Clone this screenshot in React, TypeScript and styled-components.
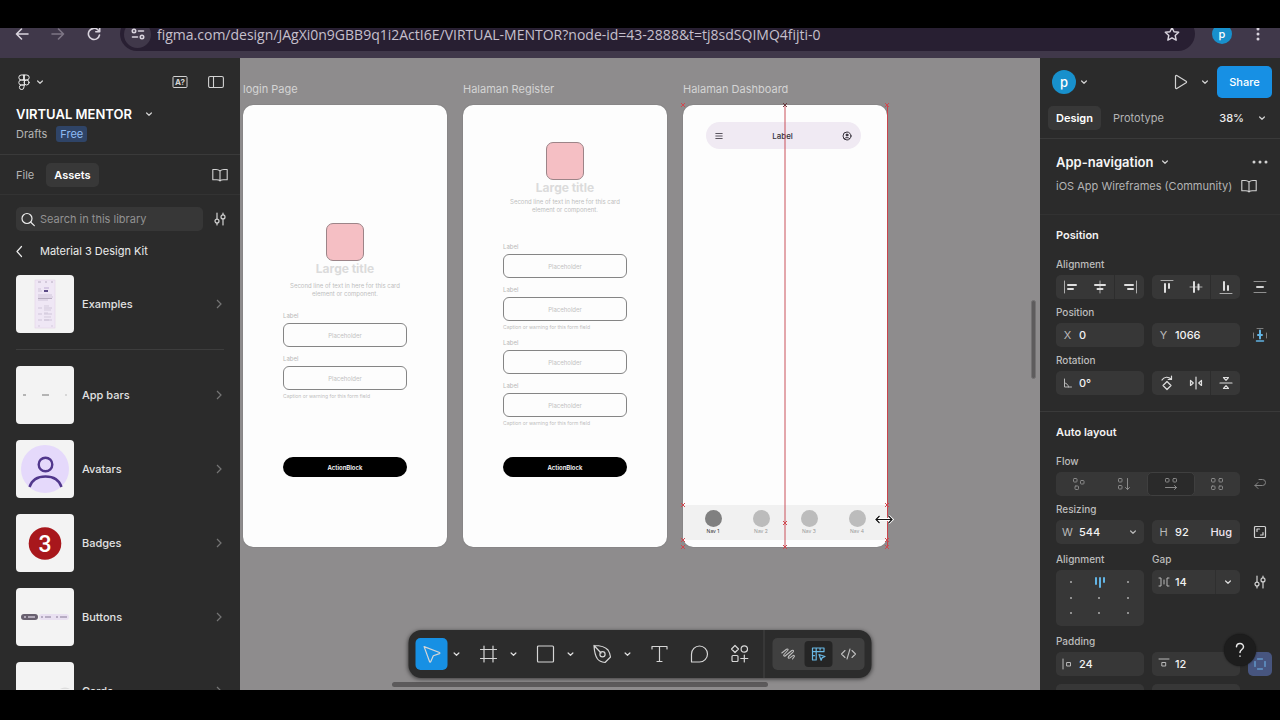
import React from "react";
import styled, { createGlobalStyle } from "styled-components";

const GlobalStyle = createGlobalStyle`
  *, *::before, *::after { box-sizing: border-box; }
  body { margin: 0; background: #000; }
  button, input { font: inherit; color: inherit; border: 0; padding: 0; margin: 0; background: none; }
  a { color: inherit; text-decoration: none; }
`;

const Page = styled.div`
  height: 100vh;
  padding: 28px 0 30px;
  display: flex;
  flex-direction: column;
  background: #000;
  color: #ececec;
  font-family: Inter, "Liberation Sans", sans-serif;
  font-size: 11px;
  overflow: hidden;
`;

/* ---------- browser bar ---------- */
const ChromeClip = styled.header`
  height: 30px;
  flex: none;
  overflow: hidden;
  display: flex;
  align-items: flex-end;
  background: #40384a;
`;
const ChromeRow = styled.div`
  flex: 1;
  height: 48px;
  display: flex;
  align-items: center;
  padding: 0 10px;
  color: #d9d4de;
`;
const ChromeButton = styled.button<{ $dim?: boolean }>`
  width: 24px;
  height: 24px;
  margin-right: 12px;
  display: grid;
  place-items: center;
  color: ${(p) => (p.$dim ? "#7d7685" : "#d9d4de")};
`;
const UrlPill = styled.div`
  flex: 1;
  height: 34px;
  margin: 0 17px 0 2px;
  padding: 0 15px 0 4px;
  border-radius: 17px;
  background: #281f32;
  display: flex;
  align-items: center;
  gap: 6px;
`;
const SiteInfo = styled.button`
  width: 27px;
  height: 27px;
  border-radius: 50%;
  background: #40384a;
  display: grid;
  place-items: center;
`;
const UrlInput = styled.input`
  flex: 1;
  min-width: 0;
  font-family: "Open Sans", sans-serif;
  font-size: 14px;
  color: #c6c0cd;
`;
const Avatar = styled.button<{ $size: number }>`
  width: ${(p) => p.$size}px;
  height: ${(p) => p.$size}px;
  border-radius: 50%;
  background: #1890cc;
  color: #fff;
  line-height: 16px;
  font-size: ${(p) => (p.$size > 20 ? 13 : 11)}px;
  font-weight: 500;
`;

/* ---------- frame of the app ---------- */
const Body = styled.div`
  flex: 1;
  min-height: 0;
  display: flex;
`;
const Panel = styled.aside`
  width: 240px;
  flex: none;
  background: #2b2b2b;
  overflow: hidden;
  position: relative;
`;
const IconButton = styled.button<{ $w?: number; $on?: boolean }>`
  width: ${(p) => p.$w ?? 24}px;
  height: 24px;
  flex: none;
  display: grid;
  place-items: center;
  border-radius: 5px;
  color: ${(p) => (p.$on ? "#a6c4ff" : "#d2d2d2")};
  background: ${(p) => (p.$on ? "#47557f" : "none")};
`;
const Spacer = styled.div`
  flex: 1;
`;
const Row = styled.div<{ $h: number }>`
  display: flex;
  align-items: center;
  height: ${(p) => p.$h}px;
`;

/* ---------- left panel ---------- */
const FileHead = styled.div`
  padding: 12px 8px 10px 16px;
  border-bottom: 1px solid #3a3a3a;
`;
const FileName = styled.h1`
  margin: 0 9px 0 0;
  font-size: 13px;
  font-weight: 600;
  color: #fff;
`;
const TitleRow = styled(Row)`
  margin-top: 10px;
`;
const Muted = styled.span`
  color: #b4b4b4;
  white-space: nowrap;
`;
const FreeBadge = styled.span`
  margin-left: 9px;
  padding: 0 4px;
  line-height: 16px;
  border-radius: 3px;
  background: #2f4467;
  color: #8fbcf5;
`;
const TabRow = styled.nav`
  height: 40px;
  display: flex;
  align-items: center;
  padding: 0 8px;
  border-bottom: 1px solid #333;
`;
const Tab = styled.button<{ $active?: boolean }>`
  height: 24px;
  padding: 0 8px;
  margin-right: 4px;
  border-radius: 5px;
  background: ${(p) => (p.$active ? "#383838" : "none")};
  color: ${(p) => (p.$active ? "#fff" : "#b4b4b4")};
  font-weight: ${(p) => (p.$active ? 600 : 400)};
`;
const SearchRow = styled.div`
  display: flex;
  gap: 5px;
  padding: 12px 8px 8px 16px;
`;
const SearchBox = styled.label`
  flex: 1;
  min-width: 0;
  height: 24px;
  display: flex;
  align-items: center;
  gap: 4px;
  padding-left: 4px;
  border-radius: 5px;
  background: #373737;
  input { flex: 1; min-width: 0; }
  input::placeholder { color: #929292; opacity: 1; }
`;
const BackRow = styled.button`
  display: flex;
  align-items: center;
  height: 24px;
  padding-left: 12px;
  gap: 13px;
`;
const AssetList = styled.ul`
  list-style: none;
  margin: 0 16px;
  padding: 12px 0 16px;
  display: flex;
  flex-direction: column;
  gap: 16px;
  &:not(:first-of-type) { border-top: 1px solid #3d3d3d; padding-top: 16px; }
`;
const AssetButton = styled.button`
  width: 100%;
  display: flex;
  align-items: center;
  gap: 8px;
  text-align: left;
  font-weight: 500;
  color: #e2e2e2;
`;
const Thumb = styled.span`
  width: 58px;
  height: 58px;
  flex: none;
  border-radius: 4px;
  background: #f3f3f3;
  overflow: hidden;
  svg { display: block; }
`;

/* ---------- canvas ---------- */
const Canvas = styled.main`
  flex: 1;
  min-width: 0;
  position: relative;
  overflow: hidden;
  background: #8e8c8d;
`;
const Frames = styled.div`
  display: flex;
  gap: 16px;
  padding: 22px 0 0 3px;
`;
const FrameColumn = styled.section`
  width: 204px;
  flex: none;
`;
const FrameName = styled.h2`
  margin: 0 0 7px;
  line-height: 18px;
  font-size: 11px;
  font-weight: 400;
  color: #d4d4d4;
  white-space: nowrap;
`;
const Frame = styled.div<{ $top: number }>`
  height: 442px;
  padding: ${(p) => p.$top}px 40px 70px;
  display: flex;
  flex-direction: column;
  align-items: stretch;
  position: relative;
  border-radius: 10px;
  background: #fdfdfd;
  box-shadow: 0 0 1px #555;
`;
const Logo = styled.div`
  width: 38px;
  height: 38px;
  align-self: center;
  border: 1px solid #9c8488;
  border-radius: 7px;
  background: #f5bfc4;
`;
const CardTitle = styled.h3`
  margin: 0;
  line-height: 16px;
  text-align: center;
  font-size: 12px;
  font-weight: 700;
  color: #dbdbdb;
`;
const CardText = styled.p<{ $gap: number }>`
  margin: ${(p) => p.$gap}px 0 0;
  text-align: center;
  font-size: 6px;
  line-height: 8px;
  color: #bdbdbd;
`;
const Form = styled.div<{ $gap: number }>`
  margin-top: ${(p) => p.$gap}px;
  display: flex;
  flex-direction: column;
  gap: 7px;
`;
const WireLabel = styled.label`
  display: block;
  padding-top: 1px;
  font-size: 6px;
  line-height: 8px;
  color: #b8b8b8;
`;
const WireInput = styled.input`
  display: block;
  width: 100%;
  height: 24px;
  margin-top: 3px;
  text-align: center;
  font-size: 6px;
  border: 1px solid #858585;
  border-radius: 6px;
  &::placeholder { color: #c2c2c2; opacity: 1; }
`;
const Caption = styled.small`
  display: block;
  margin-top: 2px;
  font-size: 5px;
  line-height: 8px;
  color: #bdbdbd;
`;
const ActionButton = styled.button`
  height: 20px;
  margin-top: auto;
  border-radius: 10px;
  background: #000;
  color: #fff;
  font-size: 6px;
  font-weight: 600;
`;
const Dashboard = styled(Frame)`
  padding: 17px 0 7px;
`;
const WireBar = styled.div`
  height: 27px;
  margin: 0 26px 0 23px;
  padding: 0 9px;
  border-radius: 14px;
  background: #f0eaf3;
  display: flex;
  align-items: center;
  justify-content: space-between;
  font-size: 8px;
  font-weight: 500;
  color: #35303a;
`;
const WireNav = styled.div`
  margin-top: auto;
  height: 35px;
  padding: 5px 6px 0;
  display: flex;
  background: #f1f1f1;
`;
const NavItem = styled.span<{ $on?: boolean }>`
  flex: 1;
  display: flex;
  flex-direction: column;
  align-items: center;
  font-size: 5px;
  line-height: 8px;
  color: ${(p) => (p.$on ? "#333" : "#999")};
  &::before {
    content: "";
    width: 17px;
    height: 17px;
    border-radius: 50%;
    background: ${(p) => (p.$on ? "#808080" : "#bcbcbc")};
  }
`;
const Guides = styled.svg`
  position: absolute;
  left: -6px;
  top: -6px;
`;
const VScroll = styled.div`
  position: absolute;
  right: 4px;
  top: 242px;
  width: 5px;
  height: 79px;
  border-radius: 3px;
  background: #5e5c5d;
  border: 1px solid #747273;
`;
const HScroll = styled.div`
  position: absolute;
  left: 19%;
  right: 34%;
  bottom: 3px;
  height: 5px;
  border-radius: 3px;
  background: #5c5a5b;
`;
const Toolbar = styled.div`
  position: absolute;
  left: 50%;
  bottom: 12px;
  transform: translateX(-50%);
  height: 48px;
  padding: 0 7px;
  display: flex;
  align-items: center;
  gap: 8px;
  border-radius: 13px;
  background: #2c2c2c;
  box-shadow: 0 1px 4px rgba(0, 0, 0, 0.6);
`;
const ToolGroup = styled.div`
  display: flex;
  align-items: center;
`;
const ShapeTools = styled(ToolGroup)`
  gap: 8px;
`;
const Tool = styled.button<{ $on?: boolean }>`
  width: 32px;
  height: 32px;
  display: grid;
  place-items: center;
  border-radius: 5px;
  color: #d6d6d6;
  background: ${(p) => (p.$on ? "#1790e4" : "none")};
`;
const ToolMore = styled.button`
  width: 17px;
  height: 32px;
  display: grid;
  place-items: center;
  color: #dedede;
`;
const ToolRule = styled.div`
  width: 1px;
  height: 48px;
  background: #454545;
`;
const ModeSwitch = styled.div`
  width: 92px;
  height: 32px;
  padding: 3px 2px;
  display: flex;
  gap: 2px;
  border-radius: 5px;
  background: #404040;
`;
const Mode = styled.button<{ $on?: boolean }>`
  flex: 1;
  display: grid;
  place-items: center;
  border-radius: 4px;
  background: ${(p) => (p.$on ? "#252525" : "none")};
  color: ${(p) => (p.$on ? "#69b7e3" : "#bdbdbd")};
`;

/* ---------- right panel ---------- */
const TopRow = styled.div`
  height: 48px;
  display: flex;
  align-items: center;
  padding: 0 8px 0 12px;
`;
const ShareButton = styled.button`
  width: 55px;
  height: 32px;
  margin-left: 4px;
  border-radius: 5px;
  background: #1790e4;
  color: #fff;
  font-weight: 500;
`;
const ModeTabs = styled.nav`
  height: 33px;
  display: flex;
  align-items: flex-start;
  padding: 0 6px 0 8px;
  border-bottom: 1px solid #3a3a3a;
`;
const Zoom = styled.button`
  height: 24px;
  display: flex;
  align-items: center;
  gap: 6px;
  font-weight: 500;
`;
const Section = styled.section`
  padding: 4px 8px 16px 16px;
  border-bottom: 1px solid #3a3a3a;
`;
const LayerSection = styled.section`
  height: 76px;
  padding: 11px 8px 0 16px;
  border-bottom: 1px solid #323232;
`;
const LayerName = styled.h2`
  margin: 0;
  font-size: 13px;
  font-weight: 600;
  color: #f6f6f6;
`;
const SectionTitle = styled.h3`
  margin: 0;
  line-height: 32px;
  font-size: 11px;
  font-weight: 600;
  color: #f2f2f2;
`;
const Grid = styled.div<{ $spaced?: boolean }>`
  display: grid;
  grid-template-columns: 1fr 1fr 24px;
  column-gap: 8px;
  align-items: start;
  margin-top: ${(p) => (p.$spaced ? 2 : 0)}px;
`;
const GroupLabel = styled.div<{ $wide?: boolean }>`
  grid-column: ${(p) => (p.$wide ? "1 / -1" : "auto")};
  height: 24px;
  padding-top: 2px;
  line-height: 22px;
  font-size: 10px;
  font-weight: 500;
  color: #bdbdbd;
`;
const Segments = styled.div<{ $span?: number; $gray?: boolean }>`
  grid-column: span ${(p) => p.$span ?? 1};
  height: 24px;
  display: flex;
  border-radius: 5px;
  background: #373737;
  color: ${(p) => (p.$gray ? "#8a8a8a" : "#dedede")};
  overflow: hidden;
`;
const Segment = styled.button<{ $on?: boolean; $rule?: boolean }>`
  flex: 1;
  display: grid;
  place-items: center;
  border-radius: ${(p) => (p.$on ? 5 : 0)}px;
  border: ${(p) => (p.$on ? "1px solid #3f3f3f" : 0)};
  background: ${(p) => (p.$on ? "#2a2a2a" : "none")};
  border-left: ${(p) => (p.$rule ? "1px solid #2d2d2d" : "")};
`;
const Field = styled.label`
  height: 24px;
  min-width: 0;
  display: flex;
  align-items: center;
  border-radius: 5px;
  background: #373737;
  color: #b9b9b9;
  input { flex: 1; width: 0; min-width: 0; color: #f2f2f2; font-weight: 500; }
`;
const FieldMark = styled.span`
  width: 23px;
  display: grid;
  place-items: center;
`;
const Hug = styled.button`
  margin-right: 8px;
  color: #f0e6f0;
  font-weight: 500;
`;
const FieldMore = styled.button`
  width: 25px;
  height: 24px;
  display: grid;
  place-items: center;
  border-left: 1px solid #2f2f2f;
  color: #dcdcdc;
`;
const AlignPad = styled.button`
  height: 56px;
  border-radius: 5px;
  background: #373737;
  display: grid;
  place-items: center;
`;
const HelpButton = styled.button`
  position: absolute;
  right: 24px;
  bottom: 24px;
  width: 32px;
  height: 32px;
  border-radius: 50%;
  background: #1d1d1d;
  color: #e6e6e6;
  display: grid;
  place-items: center;
  box-shadow: 0 0 2px #111;
`;

/* ---------- icons ---------- */
type IconProps = { size?: number; w?: number; children: React.ReactNode };
const Icon = ({ size = 16, w = 1, children }: IconProps) => (
  <svg width={size} height={size} viewBox={`0 0 ${size} ${size}`} fill="none" stroke="currentColor" strokeWidth={w} strokeLinecap="round" strokeLinejoin="round" aria-hidden="true">
    {children}
  </svg>
);
const Down = () => (
  <Icon size={8} w={1.2}><path d="M1.6 3 4 5.3 6.4 3" /></Icon>
);
const Book = () => (
  <Icon w={1.1}><path d="M8 4C7 3 5.600 2.500 4 2.500H.8v10.300H4.500C6 12.800 7.300 13 8 14c.7-1 2-1.200 3.500-1.200h3.700V2.500H12C10.400 2.500 9 3 8 4Zm0 0v9.800" /></Icon>
);
const Sliders = () => (
  <Icon w={1.2}><path d="M5 2v6M5 12.200V14M11 2v1.800M11 8v6" /><circle cx="5" cy="10.100" r="2" /><circle cx="11" cy="5.900" r="2" /></Icon>
);
const Right = () => (
  <svg width="10" height="12" viewBox="0 0 10 12" fill="none" stroke="#757575" strokeWidth="1.2" aria-hidden="true"><path d="M3 2l4 4-4 4" /></svg>
);

const Cross = ({ x, y, c = "#d0484f" }: { x: number; y: number; c?: string }) => (
  <path d={`M${x - 2} ${y - 2}l4 4m0-4l-4 4`} stroke={c} />
);

/* ---------- parts ---------- */
const WireField = ({ id, caption }: { id: string; caption?: boolean }) => (
  <div>
    <WireLabel htmlFor={id}>Label</WireLabel>
    <WireInput id={id} placeholder="Placeholder" />
    {caption && <Caption>Caption or warning for this form field</Caption>}
  </div>
);

const Asset = ({ name, children }: { name: string; children: React.ReactNode }) => (
  <li>
    <AssetButton>
      <Thumb><svg width="58" height="58" viewBox="0 0 58 58" aria-hidden="true">{children}</svg></Thumb>
      {name}
      <Spacer />
      <Right />
    </AssetButton>
  </li>
);

const NumberField = ({ mark, name, value, children }: { mark: React.ReactNode; name: string; value: string; children?: React.ReactNode }) => (
  <Field>
    <FieldMark>{mark}</FieldMark>
    <input aria-label={name} defaultValue={value} />
    {children}
  </Field>
);

const ToolItem = ({ name, on, more, children }: { name: string; on?: boolean; more?: boolean; children: React.ReactNode }) => (
  <ToolGroup>
    <Tool $on={on} aria-label={name}>{children}</Tool>
    {more && <ToolMore aria-label={`${name} options`}><Down /></ToolMore>}
  </ToolGroup>
);

const ChromeMenu = styled.button`
  width: 24px;
  height: 24px;
  margin-left: 14px;
  display: grid;
  place-items: center;
`;
const BrowserBar = () => (
  <ChromeClip>
    <ChromeRow>
      <ChromeButton aria-label="Back"><Icon w={1.6}><path d="M14 8H2.500M7.500 3 2.500 8l5 5" /></Icon></ChromeButton>
      <ChromeButton $dim aria-label="Forward"><Icon w={1.6}><path d="M2 8h11.500M8.500 3l5 5-5 5" /></Icon></ChromeButton>
      <ChromeButton aria-label="Reload"><Icon w={1.6}><path d="M13.500 9A5.600 5.600 0 1 1 12 4l1.500 1.500M13.700 1.800v4H9.800" /></Icon></ChromeButton>
      <UrlPill>
        <SiteInfo aria-label="Site information"><Icon w={1.6}><circle cx="4" cy="5" r="1.700" /><path d="M8.500 5H13.500M2.500 11h5" /><circle cx="12" cy="11" r="1.700" /></Icon></SiteInfo>
        <UrlInput aria-label="Address" defaultValue="figma.com/design/JAgXi0n9GBB9q1i2ActI6E/VIRTUAL-MENTOR?node-id=43-2888&t=tj8sdSQIMQ4fijti-0" />
        <Icon w={1.4}><path d="M8 1.500l2 4.300 4.700.5-3.500 3.200 1 4.600L8 11.800l-4.200 2.300 1-4.600L1.300 6.300 6 5.800Z" /></Icon>
      </UrlPill>
      <Avatar $size={20} aria-label="Profile">p</Avatar>
      <ChromeMenu aria-label="Browser menu"><Icon><g fill="currentColor" stroke="none"><circle cx="8" cy="3" r="1.500" /><circle cx="8" cy="8" r="1.500" /><circle cx="8" cy="13" r="1.500" /></g></Icon></ChromeMenu>
    </ChromeRow>
  </ChromeClip>
);

const LeftPanel = () => (
  <Panel>
    <FileHead>
      <Row $h={24}>
        <Icon><path d="M8 1H5.300a2.500 2.500 0 0 0 0 5H8ZM8 1h2.700a2.500 2.500 0 0 1 0 5H8ZM8 6H5.300a2.500 2.500 0 0 0 0 5H8ZM8 11H5.300a2.300 2.300 0 1 0 2.700 2.300Z" /><circle cx="10.600" cy="8.500" r="2.500" /></Icon>
        <IconButton $w={16} aria-label="Main menu"><Down /></IconButton>
        <Spacer />
        <IconButton $w={40} aria-label="Language"><svg width="16" height="16" viewBox="0 0 16 16" aria-hidden="true"><rect x="1" y="2.500" width="14" height="11" rx="1" fill="none" stroke="currentColor" /><text x="8" y="10.800" textAnchor="middle" fontSize="8" fontWeight="700" fill="currentColor">A?</text></svg></IconButton>
        <IconButton $w={32} aria-label="Toggle sidebar"><Icon w={1.1}><rect x=".6" y="2.500" width="14.800" height="11" rx="1.500" /><path d="M5.500 2.500v11" /></Icon></IconButton>
      </Row>
      <TitleRow $h={20}>
        <FileName>VIRTUAL MENTOR</FileName>
        <IconButton $w={16} aria-label="File menu"><Down /></IconButton>
      </TitleRow>
      <Row $h={20}><Muted>Drafts</Muted><FreeBadge>Free</FreeBadge></Row>
    </FileHead>
    <TabRow>
      <Tab>File</Tab>
      <Tab $active>Assets</Tab>
      <Spacer />
      <IconButton aria-label="Libraries"><Book /></IconButton>
    </TabRow>
    <SearchRow>
      <SearchBox>
        <Icon w={1.2}><circle cx="7" cy="7.500" r="5" /><path d="M10.800 11.300 14.300 14.600" /></Icon>
        <input aria-label="Search assets" placeholder="Search in this library" />
      </SearchBox>
      <IconButton aria-label="Filter"><Sliders /></IconButton>
    </SearchRow>
    <BackRow>
      <Icon size={15} w={1.2}><path d="M9.500 2.500 5 7.500l4.500 5" /></Icon>
      Material 3 Design Kit
    </BackRow>
    <AssetList>
      <Asset name="Examples">
        <rect x="19" y="5" width="20" height="48" fill="#efe7f5" stroke="#e4d3e8" strokeWidth=".6" />
        <path d="M22 7h3m4 0h2m4 0h2M22 23.500h14" stroke="#aaa0b4" strokeWidth=".8" />
        <rect x="28" y="12" width="5" height="2" fill="#d6c9e4" /><rect x="28" y="15" width="4" height="2" fill="#5b4b86" />
        <path d="M22 14h3m-3 2h4M22 20h14m-14 2h15m-15 3h10M22 33h4m2 0h8M22 39h4m2 0h8M22 45h4m2 0h8" stroke="#d0c5da" strokeWidth="1.200" />
        <path d="M28 31h5m-5 4h7m-7 3h4m-4 4h7m-7 3h5M22 51h2m11 0h2" stroke="#c8bfd2" strokeWidth=".7" />
      </Asset>
    </AssetList>
    <AssetList>
      <Asset name="App bars">
        <path d="M7 29h3m16 0h7" stroke="#777" strokeWidth="1.200" /><path d="M49 29h2" stroke="#bbb" />
      </Asset>
      <Asset name="Avatars">
        <circle cx="29" cy="29" r="24" fill="#e5d9fb" />
        <g fill="none" stroke="#51378c" strokeWidth="2.400"><circle cx="29.500" cy="24.500" r="6.800" /><path d="M13.500 47C16 39.500 22 36.500 29.500 36.500S43 39.500 45.500 47" /></g>
      </Asset>
      <Asset name="Badges">
        <circle cx="29" cy="29.500" r="16.300" fill="#a8171c" />
        <text x="29" y="37.500" textAnchor="middle" fontFamily="Roboto, sans-serif" fontSize="23" fontWeight="500" fill="#fff">3</text>
      </Asset>
      <Asset name="Buttons">
        <rect x="5" y="26" width="17" height="6" rx="3" fill="#68606f" /><rect x="23" y="26" width="30" height="6" rx="3" fill="#e9e0f1" />
        <path d="M8 29h2m2 0h7" stroke="#c8c0d0" strokeWidth="1.500" /><path d="M25 29h2m2 0h6m5 0h2m2 0h7" stroke="#a79bb4" strokeWidth="1.300" />
      </Asset>
      <Asset name="Cards">
        <path d="M44 27a7 5 0 0 1 10 0" fill="#ddd" />
      </Asset>
    </AssetList>
  </Panel>
);

const CanvasArea = () => (
  <Canvas>
    <Frames>
      <FrameColumn>
        <FrameName>login Page</FrameName>
        <Frame $top={118}>
          <Logo />
          <CardTitle>Large title</CardTitle>
          <CardText $gap={5}>Second line of text in here for this card<br />element or component.</CardText>
          <Form $gap={13}>
            <WireField id="login-1" />
            <WireField id="login-2" caption />
          </Form>
          <ActionButton>ActionBlock</ActionButton>
        </Frame>
      </FrameColumn>
      <FrameColumn>
        <FrameName>Halaman Register</FrameName>
        <Frame $top={37}>
          <Logo />
          <CardTitle>Large title</CardTitle>
          <CardText $gap={2}>Second line of text in here for this card<br />element or component.</CardText>
          <Form $gap={28}>
            <WireField id="register-1" />
            <WireField id="register-2" caption />
            <WireField id="register-3" />
            <WireField id="register-4" caption />
          </Form>
          <ActionButton>ActionBlock</ActionButton>
        </Frame>
      </FrameColumn>
      <FrameColumn>
        <FrameName>Halaman Dashboard</FrameName>
        <Dashboard $top={17}>
          <WireBar>
            <Icon size={8} w={0.8}><path d="M.8 1.500h6.400M.8 4h6.400M.8 6.500h6.400" /></Icon>
            Label
            <Icon size={10} w={1}><circle cx="5" cy="5" r="4" /><circle cx="5" cy="4" r="1" fill="currentColor" /><path d="M2.300 7.600c1.500-1.400 4-1.400 5.400 0" /></Icon>
          </WireBar>
          <WireNav>
            <NavItem $on>Nav 1</NavItem>
            <NavItem>Nav 2</NavItem>
            <NavItem>Nav 3</NavItem>
            <NavItem>Nav 4</NavItem>
          </WireNav>
          <Guides width="220" height="456" viewBox="0 0 220 456" fill="none" aria-hidden="true">
            <path d="M108 6v442" stroke="#c9505a" strokeWidth="1" />
            <path d="M210.500 6v442" stroke="#c9444c" strokeWidth="1" />
            <Cross x={6} y={6} /><Cross x={108} y={6} c="#6b3b40" /><Cross x={210} y={6} />
            <Cross x={6} y={406} /><Cross x={210} y={406} />
            <Cross x={6} y={441} /><Cross x={210} y={441} />
            <Cross x={6} y={448} /><Cross x={108} y={448} /><Cross x={210} y={448} />
            <Cross x={108} y={424} />
            <path d="M199 420.500h16M202.500 417l-3.500 3.500 3.500 3.500M211.500 417l3.500 3.500-3.500 3.500" stroke="#fff" strokeWidth="3" />
            <path d="M199 420.500h16M202.500 417l-3.500 3.500 3.500 3.500M211.500 417l3.500 3.500-3.500 3.500" stroke="#111" strokeWidth="1.200" />
          </Guides>
        </Dashboard>
      </FrameColumn>
    </Frames>
    <VScroll />
    <HScroll />
    <Toolbar role="toolbar" aria-label="Tools">
      <ShapeTools>
        <ToolItem name="Move" on more><Icon size={20} w={1.2}><path d="M2.600 2.600 18 8.500c.5.200.5.900 0 1.100l-6.200 2.200-2.600 6c-.2.500-.9.500-1.100 0Z" /></Icon></ToolItem>
        <ToolItem name="Frame" more><Icon size={20} w={1.2}><path d="M5.500 2v16M14.500 2v16M2 5.500h16M2 14.500h16" /></Icon></ToolItem>
        <ToolItem name="Rectangle" more><Icon size={20} w={1.2}><rect x="2" y="2" width="16" height="16" rx="1" /></Icon></ToolItem>
        <ToolItem name="Pen" more><Icon size={20} w={1.2}><path d="M1.500 1.500C7 1.500 13 3 15.500 6c1.500 2 2 4 2.500 7l-5.500 5.500C9 18 6.500 17 5 15 2.800 12 1.800 7 1.500 1.500Zm0 0 7 7.500" /><circle cx="10" cy="10.300" r="2.600" /></Icon></ToolItem>
      </ShapeTools>
      <ToolItem name="Text"><Icon size={20} w={1.2}><path d="M2.500 5V2.500h15V5M10 2.500v15M7.500 17.500h5" /></Icon></ToolItem>
      <ToolItem name="Comment"><Icon size={20} w={1.2}><path d="M2 18v-8a8 8 0 1 1 8 8Z" /></Icon></ToolItem>
      <ToolItem name="Actions"><Icon size={20} w={1.2}><path d="M5.500 1.500 9 5 5.500 8.500 2 5ZM14.800 11v7M11.300 14.500h7" /><circle cx="14.800" cy="5" r="3.200" /><rect x="2.500" y="11.500" width="6" height="6" rx="1" /></Icon></ToolItem>
      <ToolRule />
      <ModeSwitch>
        <Mode aria-label="Draw"><Icon w={1.1}><path d="M1.300 7 6 3.300c1.200-.8 2.100.2 1.200 1.200L3.500 8.500c-.9 1.200.3 2.200 1.400 1.300L11.300 4.500c1.200-.8 2.300.3 1.400 1.400L8 10.500c-.9 1.200.2 2.300 1.400 1.400l3-2.300c1.100-.7 2 .2 1.200 1.200L12 13" /></Icon></Mode>
        <Mode $on aria-label="Design"><Icon w={1.2}><path d="M2 2h11.500v3.700H5.700V14H2ZM5.700 2v3.700H2M9.600 2v2M2 9.700h2M8.500 8.500l6 2-2.700 1.100-1.200 2.700Z" /></Icon></Mode>
        <Mode aria-label="Dev"><Icon w={1.1}><path d="M4.500 4.500 1 8l3.500 3.500M11.500 4.500 15 8l-3.500 3.500M9.500 3l-3 10" /></Icon></Mode>
      </ModeSwitch>
    </Toolbar>
  </Canvas>
);

const NextRow = styled(Grid)`
  margin-top: 8px;
`;
const WrapButton = styled(IconButton)`
  color: #858585;
`;
const RightPanel = () => (
  <Panel>
    <TopRow>
      <Avatar $size={24} aria-label="Account">p</Avatar>
      <IconButton $w={16} aria-label="Account menu"><Down /></IconButton>
      <Spacer />
      <IconButton $w={32} aria-label="Present"><Icon w={1.2}><path d="M2.500 2.300v11.400c0 .8.700 1 1.300.7l9.300-5.700c.6-.4.600-1 0-1.400L3.800 1.600c-.6-.3-1.300-.1-1.300.7Z" /></Icon></IconButton>
      <IconButton $w={16} aria-label="Present options"><Down /></IconButton>
      <ShareButton>Share</ShareButton>
    </TopRow>
    <ModeTabs>
      <Tab $active>Design</Tab>
      <Tab>Prototype</Tab>
      <Spacer />
      <Zoom>38%<IconButton as="span"><Down /></IconButton></Zoom>
    </ModeTabs>
    <LayerSection>
      <Row $h={24}>
        <LayerName>App-navigation</LayerName>
        <IconButton aria-label="Component menu"><Down /></IconButton>
        <Spacer />
        <IconButton aria-label="More"><Icon><g fill="currentColor" stroke="none"><circle cx="2" cy="8" r="1.500" /><circle cx="8" cy="8" r="1.500" /><circle cx="14" cy="8" r="1.500" /></g></Icon></IconButton>
      </Row>
      <Row $h={24}>
        <Muted>iOS App Wireframes (Community)</Muted>
        <IconButton $w={34} aria-label="Open library"><Book /></IconButton>
      </Row>
    </LayerSection>
    <Section>
      <SectionTitle>Position</SectionTitle>
      <Grid>
        <GroupLabel $wide>Alignment</GroupLabel>
        <Segments>
          <Segment aria-label="Align left"><Icon><path d="M1.500 2v12" opacity=".7" /><path d="M5 6h8M5 10h5" strokeWidth="2" /></Icon></Segment>
          <Segment aria-label="Align center"><Icon><path d="M8 2v12" opacity=".7" /><path d="M3 6h10M5.500 10h5" strokeWidth="2" /></Icon></Segment>
          <Segment $rule aria-label="Align right"><Icon><path d="M14.500 2v12" opacity=".7" /><path d="M3 6h8M6 10h5" strokeWidth="2" /></Icon></Segment>
        </Segments>
        <Segments>
          <Segment aria-label="Align top"><Icon><path d="M2 1.500h12" opacity=".7" /><path d="M6 5v8M10 5v4" strokeWidth="2" /></Icon></Segment>
          <Segment aria-label="Align middle"><Icon><path d="M2 8h12" opacity=".7" /><path d="M6 3v10M10.500 5.500v5" strokeWidth="2" /></Icon></Segment>
          <Segment $rule aria-label="Align bottom"><Icon><path d="M2 14.500h12" opacity=".7" /><path d="M6 3v8M10 7v4" strokeWidth="2" /></Icon></Segment>
        </Segments>
        <IconButton aria-label="Distribute"><Icon><path d="M2 2.500h12M2 13.500h12" opacity=".6" /><path d="M5 8h6" strokeWidth="2" /></Icon></IconButton>
      </Grid>
      <Grid>
        <GroupLabel $wide>Position</GroupLabel>
        <NumberField mark="X" name="X" value="0" />
        <NumberField mark="Y" name="Y" value="1066" />
        <IconButton aria-label="Constraints"><Icon><path d="M5 1.500h6M1.500 6v5M14.500 6v5" opacity=".5" /><g stroke="#62b4e4"><path d="M8 3.500v8M6 8h4" strokeWidth="2" /><path d="M4.500 14h7" strokeWidth="1.500" /></g></Icon></IconButton>
      </Grid>
      <Grid>
        <GroupLabel $wide>Rotation</GroupLabel>
        <NumberField mark={<Icon><path d="M4.500 4v8h7M4.500 8a4 4 0 0 1 4 4" /></Icon>} name="Rotation" value="0°" />
        <Segments>
          <Segment aria-label="Rotate 90"><Icon w={1.2}><path d="M8 6.500 12 10.500 8 14.500 4 10.500ZM3 5C5 1.500 9.500 1.500 12 4M12.500 1.200V4.500H9.200" /></Icon></Segment>
          <Segment aria-label="Flip horizontal"><Icon w={1.2}><path d="M8 2v12M2.500 5.500v5L5.300 8ZM13.500 5.500v5L10.700 8Z" /></Icon></Segment>
          <Segment $rule aria-label="Flip vertical"><Icon w={1.2}><path d="M2 8h12M5.500 2.500h5L8 5.300ZM5.500 13.500h5L8 10.700Z" /></Icon></Segment>
        </Segments>
      </Grid>
    </Section>
    <Section>
      <SectionTitle>Auto layout</SectionTitle>
      <Grid>
        <GroupLabel $wide>Flow</GroupLabel>
        <Segments $span={2} $gray>
          <Segment aria-label="Freeform"><Icon><rect x="2.500" y="2.500" width="3.500" height="3.500" rx=".8" /><rect x="9.500" y="4.500" width="3.500" height="3.500" rx=".8" /><rect x="4" y="10" width="3.500" height="3.500" rx=".8" /></Icon></Segment>
          <Segment aria-label="Vertical"><Icon><rect x="2.500" y="2.500" width="3.500" height="3.500" rx=".8" /><rect x="2.500" y="9.500" width="3.500" height="3.500" rx=".8" /><path d="M11.500 2.500v11M9.500 11.500l2 2 2-2" /></Icon></Segment>
          <Segment $on aria-label="Horizontal"><Icon><rect x="2.500" y="2.500" width="3.500" height="3.500" rx=".8" /><rect x="10" y="2.500" width="3.500" height="3.500" rx=".8" /><path d="M2.500 11.500h11M11.500 9.500l2 2-2 2" /></Icon></Segment>
          <Segment aria-label="Grid"><Icon><rect x="2.500" y="2.500" width="3.500" height="3.500" rx=".8" /><rect x="10" y="2.500" width="3.500" height="3.500" rx=".8" /><rect x="2.500" y="10" width="3.500" height="3.500" rx=".8" /><rect x="10" y="10" width="3.500" height="3.500" rx=".8" /></Icon></Segment>
        </Segments>
        <WrapButton aria-label="Wrap"><Icon><path d="M7 3.500h3.500a2.900 2.900 0 0 1 0 6H3M6 6.500l-3 3 3 3" /></Icon></WrapButton>
      </Grid>
      <Grid>
        <GroupLabel $wide>Resizing</GroupLabel>
        <NumberField mark="W" name="Width" value="544"><FieldMark><Down /></FieldMark></NumberField>
        <NumberField mark="H" name="Height" value="92"><Hug>Hug</Hug></NumberField>
        <IconButton aria-label="Clip"><Icon w={1.2}><rect x="2.500" y="2.500" width="11" height="11" rx="1" /><path d="M5 7.500V5h2.500M11 8.500V11H8.500" /></Icon></IconButton>
      </Grid>
      <Grid $spaced>
        <GroupLabel>Alignment</GroupLabel>
        <GroupLabel>Gap</GroupLabel>
        <span />
        <AlignPad aria-label="Align children">
          <svg width="88" height="56" viewBox="0 0 88 56" aria-hidden="true">
            <g fill="#8f8f8f">
              {[[15, 12], [72, 12], [15, 28], [43, 28], [72, 28], [15, 43], [43, 43], [72, 43]].map(([x, y]) => <rect key={`${x}-${y}`} x={x - 1} y={y - 1} width="2" height="2" />)}
            </g>
            <path d="M40 8v6M44 8v9M48 8v4" stroke="#62b4e4" strokeWidth="2" strokeLinecap="round" />
          </svg>
        </AlignPad>
        <NumberField mark={<Icon><path d="M3 4h2v8H3M13 4h-2v8h2M8 6v4" /></Icon>} name="Gap" value="14"><FieldMore aria-label="Gap options"><Down /></FieldMore></NumberField>
        <IconButton aria-label="Layout settings"><Sliders /></IconButton>
      </Grid>
      <Grid $spaced>
        <GroupLabel $wide>Padding</GroupLabel>
        <NumberField mark={<Icon><path d="M3 3v10M7 6.500h3.500V10H7Z" /></Icon>} name="Horizontal padding" value="24" />
        <NumberField mark={<Icon><path d="M3 3h10M6.200 6.500h3.500V10H6.200Z" /></Icon>} name="Vertical padding" value="12" />
        <IconButton $on aria-label="Individual padding"><Icon><path d="M5.500 3h5M5.500 13h5M3 5.500v5M13 5.500v5" stroke="#6fb8f0" /></Icon></IconButton>
      </Grid>
      <NextRow>
        <Field><input aria-label="Right padding" /></Field>
        <Field><input aria-label="Bottom padding" /></Field>
      </NextRow>
    </Section>
    <HelpButton aria-label="Help"><Icon w={1.5}><path d="M4.500 4.800c.2-4.600 7.200-4.300 7 .2C11.300 7.500 8 7.600 8 10.500M8 14v.2" /></Icon></HelpButton>
  </Panel>
);

export default function App() {
  return (
    <>
      <GlobalStyle />
      <Page>
        <BrowserBar />
        <Body>
          <LeftPanel />
          <CanvasArea />
          <RightPanel />
        </Body>
      </Page>
    </>
  );
}
